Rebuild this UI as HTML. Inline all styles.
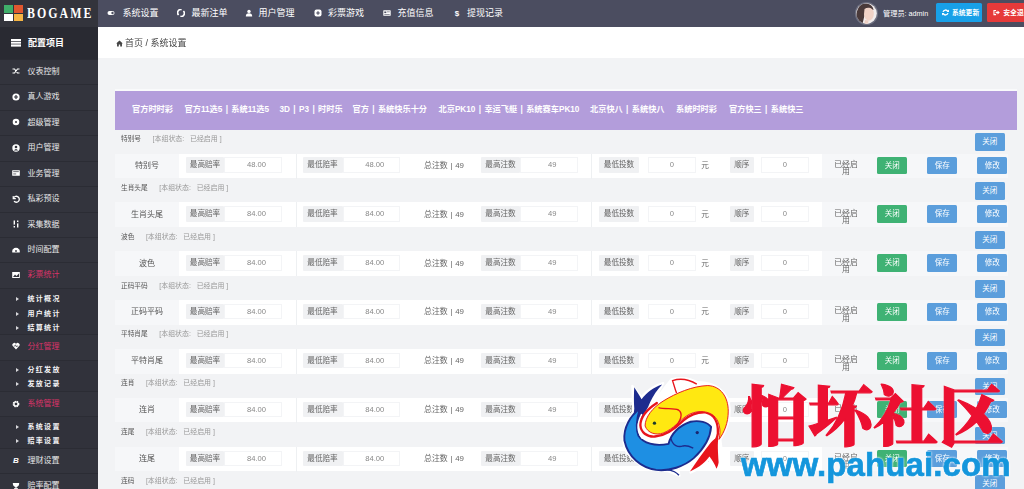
<!DOCTYPE html><html lang="zh-CN"><head><meta charset="utf-8"><title>系统设置</title><style>
*{box-sizing:border-box;margin:0;padding:0}
html,body{width:1024px;height:489px;overflow:hidden;background:#f2f3f5;font-family:'Liberation Sans', 'Noto Sans CJK SC', sans-serif;color:#555}
#wrap{position:relative;width:1024px;height:489px;overflow:hidden;filter:blur(0.45px)}
.abs{position:absolute}
#top{left:0;top:0;width:1024px;height:27px;background:#4b4d60}
#logo{left:0;top:0;width:98px;height:27px;background:#33343c}
#side{left:0;top:27px;width:98px;height:462px;background:#33343d}
.nav{position:absolute;top:0;height:27px;line-height:27px;color:#fff;font-size:9px;white-space:nowrap}
.sitem{position:absolute;left:0;width:98px;height:25.5px;border-top:1px solid #2b2c34;color:#e8e8ea;font-size:8px;line-height:25px;white-space:nowrap}
.sitem span{position:absolute;left:27.5px}
.sitem i{position:absolute;left:11.5px;width:8px;height:8px}
.sitem.pink{color:#dc3369}
.sub{position:absolute;left:0;width:98px;background:#31323b;border-top:1px solid #2b2c34}
.sub div{position:absolute;left:27.5px;color:#f4f4f6;font-weight:bold;font-size:7px;letter-spacing:1.3px;white-space:nowrap;line-height:10px}
.sub b{position:absolute;left:16px;width:0;height:0;border-left:3px solid #d8d8dc;border-top:2px solid transparent;border-bottom:2px solid transparent}
.tab{position:absolute;top:92px;height:38px;line-height:35px;color:#fff;font-size:8.2px;white-space:nowrap;font-weight:bold;word-spacing:1.1px}
.gh{position:absolute;left:121px;font-size:6.7px;color:#555;white-space:nowrap;line-height:10px}
.gh em{font-style:normal;color:#999;position:absolute;top:0;font-size:6.95px}
.row{position:absolute;left:179px;width:643px;height:24.5px;background:#fff}
.lab{position:absolute;height:15.5px;line-height:15.5px;background:#f0f1f3;color:#666;font-size:7.6px;text-align:center;border-radius:1px;white-space:nowrap}
.inp{position:absolute;height:15.5px;line-height:13.6px;background:#fff;border:1px solid #f3f4f6;color:#888;font-size:7.6px;text-align:center;padding-left:7px}
.txt{position:absolute;font-size:7.6px;color:#666;white-space:nowrap;line-height:10px;text-align:center}
.btn{position:absolute;height:17.6px;line-height:17.4px;color:#fff;font-size:7.5px;text-align:center;border-radius:1.5px;width:30.3px}
.blue{background:#5b9edc}
.green{background:#3fb274}
.vsep{position:absolute;width:1px;background:#eef0f2;top:0;height:25px}
</style></head><body><div id="wrap">
<div id="top" class="abs"></div><div id="logo" class="abs">
<svg class="abs" style="left:4px;top:5px" width="19" height="16" viewBox="0 0 19 16"><rect x="0" y="0" width="9" height="8" fill="#3fae6a"/><rect x="10" y="0" width="9" height="8" fill="#e0572f"/><rect x="0" y="9" width="9" height="7" fill="#fff"/><rect x="10" y="9" width="9" height="7" fill="#f5b544"/></svg>
<div class="abs" style="left:27px;top:0;height:27px;line-height:27px;color:#fff;font-family:'Liberation Serif', 'Noto Serif CJK SC', serif;font-weight:bold;font-size:14px;letter-spacing:2.4px;white-space:nowrap;transform:scaleX(0.85);transform-origin:0 50%">BOGAME</div>
</div>
<svg class="abs" style="left:107px;top:9px" width="8" height="8" viewBox="0 0 8 8"><rect x="0.5" y="2" width="7" height="4" rx="2" fill="#fff"/><circle cx="5.5" cy="4" r="1.2" fill="#4b4d60"/></svg>
<div class="nav" style="left:122.5px">系统设置</div>
<svg class="abs" style="left:177px;top:9px" width="8" height="8" viewBox="0 0 8 8"><path d="M4.6 0.6 A3.2 3.2 0 0 0 1.6 6" stroke="#fff" stroke-width="1.7" fill="none"/><path d="M3.4 7.4 A3.2 3.2 0 0 0 6.4 2" stroke="#fff" stroke-width="1.7" fill="none"/></svg>
<div class="nav" style="left:191.5px">最新注单</div>
<svg class="abs" style="left:245px;top:9px" width="8" height="8" viewBox="0 0 8 8"><circle cx="4" cy="2.4" r="1.7" fill="#fff"/><path d="M0.8 7.5 Q0.8 4.3 4 4.3 Q7.2 4.3 7.2 7.5 Z" fill="#fff"/></svg>
<div class="nav" style="left:258.5px">用户管理</div>
<svg class="abs" style="left:314px;top:9px" width="8" height="8" viewBox="0 0 8 8"><rect x="0.5" y="0.5" width="7" height="7" rx="2" fill="#fff"/><path d="M4 2.2 V5.8 M2.2 4 H5.8" stroke="#4b4d60" stroke-width="1.2"/></svg>
<div class="nav" style="left:328px">彩票游戏</div>
<svg class="abs" style="left:383px;top:9px" width="8" height="8" viewBox="0 0 8 8"><rect x="0.3" y="1.2" width="7.4" height="5.6" rx="0.6" fill="#fff"/><rect x="1.3" y="2.5" width="2" height="1.6" fill="#4b4d60"/><rect x="4" y="2.6" width="2.8" height="0.6" fill="#4b4d60"/><rect x="1.3" y="5" width="5.4" height="0.6" fill="#4b4d60"/></svg>
<div class="nav" style="left:397.5px">充值信息</div>
<svg class="abs" style="left:453px;top:9px" width="8" height="8" viewBox="0 0 8 8"><text x="4" y="7" font-size="8" font-weight="bold" fill="#fff" text-anchor="middle" font-family="Liberation Sans, sans-serif">$</text></svg>
<div class="nav" style="left:467px">提现记录</div>
<svg class="abs" style="left:853.5px;top:0.5px" width="25" height="25" viewBox="0 0 25 25"><defs><clipPath id="av"><circle cx="12.5" cy="12.5" r="10.3"/></clipPath></defs><circle cx="12.5" cy="12.5" r="11.6" fill="#6d6f80"/><g clip-path="url(#av)"><rect width="25" height="25" fill="#f1ecec"/><path d="M2 25 C1 12 4 2.5 11 2.5 C16 2.5 19 5 19.5 9 L12 8 L8 25 Z" fill="#4a3a3a"/><path d="M10.5 8 C14 5.5 19.5 7 19.8 11.5 C20 15.5 18.5 19 15.5 19.5 C12.5 19.8 10 17 10 13 Z" fill="#f0d2c6"/><path d="M9 25 Q14 18 21 25 Z" fill="#fbf7f6"/><path d="M11 19 L14.5 19.5 L14 24 L10 24 Z" fill="#edcfc3"/></g></svg>
<div class="abs" style="left:883px;top:0;height:27px;line-height:27px;color:#fff;font-size:7.2px;white-space:nowrap">管理员: admin</div>
<div class="abs" style="left:936px;top:2.7px;width:46px;height:19px;background:#18a0e8;border-radius:1.5px;color:#fff;font-size:6.8px;font-weight:bold;line-height:19px;white-space:nowrap"><svg class="abs" style="left:6px;top:6px" width="7" height="7" viewBox="0 0 8 8"><path d="M6.6 2.6 A3 3 0 0 0 1.2 3.3" stroke="#fff" stroke-width="1.6" fill="none"/><path d="M1.4 5.4 A3 3 0 0 0 6.8 4.7" stroke="#fff" stroke-width="1.6" fill="none"/><path d="M5.2 3.3 H8 V0.5 Z M2.8 4.7 H0 V7.5 Z" fill="#fff"/></svg><span class="abs" style="left:16px;top:0">系统更新</span></div>
<div class="abs" style="left:987.3px;top:2.7px;width:45px;height:19px;background:#e63a3a;border-radius:1.5px;color:#fff;font-size:6.8px;font-weight:bold;line-height:19px;white-space:nowrap"><svg class="abs" style="left:6px;top:6px" width="7" height="7" viewBox="0 0 8 8"><path d="M0.5 1 H3.5 V2.2 H1.7 V5.8 H3.5 V7 H0.5 Z" fill="#fff"/><path d="M3 3.2 H5.2 V1.6 L7.8 4 L5.2 6.4 V4.8 H3 Z" fill="#fff"/></svg><span class="abs" style="left:16px;top:0">安全退出</span></div>
<div id="side" class="abs"></div>
<div class="abs" style="left:0;top:27px;width:98px;height:33px;background:#292a32"></div>
<svg class="abs" style="left:11px;top:38.5px" width="10" height="8" viewBox="0 0 10 8"><rect x="0" y="0" width="10" height="2" fill="#fff"/><rect x="0" y="2.7" width="10" height="2" fill="#fff"/><rect x="0" y="5.4" width="10" height="2.2" fill="#fff"/></svg>
<div class="abs" style="left:28px;top:27px;height:33px;line-height:32px;color:#fff;font-size:9px;font-weight:bold;white-space:nowrap">配置项目</div>
<div class="sitem" style="top:58.5px;height:25.5px;line-height:23.4px"><i style="top:7.7px"><svg width="8" height="8" viewBox="0 0 8 8" style="display:block"><path d="M0.5 2 H2.5 L5.5 6 H7.5 M0.5 6 H2.5 L5.5 2 H7.5" stroke="#fff" stroke-width="1.2" fill="none"/></svg></i><span>仪表控制</span></div>
<div class="sitem" style="top:84px;height:25.5px;line-height:23.4px"><i style="top:7.7px"><svg width="8" height="8" viewBox="0 0 8 8" style="display:block"><circle cx="4" cy="4" r="3.6" fill="#fff"/><path d="M4 2 V6 M2 4 H6" stroke="#33343d" stroke-width="1.2"/></svg></i><span>真人游戏</span></div>
<div class="sitem" style="top:109.5px;height:25.5px;line-height:23.4px"><i style="top:7.7px"><svg width="8" height="8" viewBox="0 0 8 8" style="display:block"><circle cx="4" cy="4" r="3.3" fill="#fff"/><circle cx="4" cy="4" r="1" fill="#33343d"/></svg></i><span>超级管理</span></div>
<div class="sitem" style="top:135px;height:25.5px;line-height:23.4px"><i style="top:7.7px"><svg width="8" height="8" viewBox="0 0 8 8" style="display:block"><circle cx="4" cy="4" r="3.7" fill="#fff"/><circle cx="4" cy="3" r="1.3" fill="#33343d"/><path d="M1.8 6.6 Q4 3.6 6.2 6.6 Z" fill="#33343d"/></svg></i><span>用户管理</span></div>
<div class="sitem" style="top:160.5px;height:25.5px;line-height:23.4px"><i style="top:7.7px"><svg width="8" height="8" viewBox="0 0 8 8" style="display:block"><rect x="0.2" y="1.2" width="7.6" height="5.6" rx="0.5" fill="#fff"/><rect x="1.2" y="2.4" width="5.6" height="0.7" fill="#33343d"/><rect x="1.2" y="4.6" width="3" height="0.7" fill="#33343d"/></svg></i><span>业务管理</span></div>
<div class="sitem" style="top:186px;height:25.5px;line-height:23.4px"><i style="top:7.7px"><svg width="8" height="8" viewBox="0 0 8 8" style="display:block"><path d="M1.2 1 V3.6 H3.8" stroke="#fff" stroke-width="1.1" fill="none"/><path d="M1.4 3.4 A3 3 0 1 1 2 6.2" stroke="#fff" stroke-width="1.3" fill="none"/></svg></i><span>私彩预设</span></div>
<div class="sitem" style="top:211.5px;height:25.5px;line-height:23.4px"><i style="top:7.7px"><svg width="8" height="8" viewBox="0 0 8 8" style="display:block"><path d="M2.3 0.5 V7.5 M5.7 0.5 V7.5" stroke="#fff" stroke-width="1.4"/><rect x="1.2" y="4.6" width="2.2" height="1.4" fill="#33343d"/><rect x="4.6" y="2" width="2.2" height="1.4" fill="#33343d"/></svg></i><span>采集数据</span></div>
<div class="sitem" style="top:237px;height:25.5px;line-height:23.4px"><i style="top:7.7px"><svg width="8" height="8" viewBox="0 0 8 8" style="display:block"><path d="M0.3 6.5 A3.8 3.8 0 1 1 7.7 6.5 Z" fill="#fff"/><circle cx="4" cy="5" r="0.9" fill="#33343d"/></svg></i><span>时间配置</span></div>
<div class="sitem pink" style="top:262px;height:26px;line-height:23.4px"><i style="top:7.7px"><svg width="8" height="8" viewBox="0 0 8 8" style="display:block"><rect x="0.2" y="1" width="7.6" height="6" fill="#fff"/><path d="M1 6 L3 3.5 L4.5 5 L7 2.4 V6 Z" fill="#33343d"/></svg></i><span>彩票统计</span></div>
<div class="sub" style="top:288px;height:45.5px"><b style="top:8px"></b><div style="top:5px">统计概况</div><b style="top:22.5px"></b><div style="top:19.5px">用户统计</div><b style="top:37px"></b><div style="top:34px">结算统计</div></div>
<div class="sitem pink" style="top:333.5px;height:26px;line-height:23.4px"><i style="top:7.7px"><svg width="8" height="8" viewBox="0 0 8 8" style="display:block"><path d="M4 7.4 L0.6 3.8 A1.9 1.9 0 0 1 4 1.9 A1.9 1.9 0 0 1 7.4 3.8 Z" fill="#fff"/><path d="M1.8 4 H3 L3.6 2.8 L4.4 5 L5 4 H6.2" stroke="#33343d" stroke-width="0.6" fill="none"/></svg></i><span>分红管理</span></div>
<div class="sub" style="top:359.5px;height:31.5px"><b style="top:7.5px"></b><div style="top:4.5px">分红发放</div><b style="top:21.5px"></b><div style="top:18.5px">发放记录</div></div>
<div class="sitem pink" style="top:391px;height:25px;line-height:23.4px"><i style="top:7.7px"><svg width="8" height="8" viewBox="0 0 8 8" style="display:block"><circle cx="4" cy="4" r="2.6" stroke="#fff" stroke-width="1.5" fill="none" stroke-dasharray="1.4 0.7"/><circle cx="4" cy="4" r="2" stroke="#fff" stroke-width="1.1" fill="none"/></svg></i><span>系统管理</span></div>
<div class="sub" style="top:416px;height:31.5px"><b style="top:7.5px"></b><div style="top:4.5px">系统设置</div><b style="top:22px"></b><div style="top:19px">赔率设置</div></div>
<div class="sitem" style="top:447.5px;height:25.5px;line-height:23.4px"><i style="top:7.7px"><svg width="8" height="8" viewBox="0 0 8 8" style="display:block"><text x="4" y="7" font-size="8" font-weight="bold" fill="#fff" text-anchor="middle" font-family="Liberation Sans, sans-serif">B</text></svg></i><span>理财设置</span></div>
<div class="sitem" style="top:473px;height:25.5px;line-height:23.4px"><i style="top:7.7px"><svg width="8" height="8" viewBox="0 0 8 8" style="display:block"><path d="M0.8 1 H7.2 Q7.2 4.6 4.6 5 V6.3 H6 V7.3 H2 V6.3 H3.4 V5 Q0.8 4.6 0.8 1 Z" fill="#fff"/></svg></i><span>赔率配置</span></div>
<div class="abs" style="left:98px;top:27px;width:926px;height:31px;background:#fff"></div>
<svg class="abs" style="left:115.5px;top:40px" width="7" height="7" viewBox="0 0 8 8"><path d="M4 0.5 L0.2 4 H1.2 V7.5 H3.2 V5.2 H4.8 V7.5 H6.8 V4 H7.8 Z" fill="#444"/></svg>
<div class="abs" style="left:125px;top:27px;height:33px;line-height:33px;font-size:9px;color:#444;white-space:nowrap">首页 / 系统设置</div>
<div class="abs" style="left:115px;top:89px;width:902px;height:2px;background:#f9fafb"></div>
<div class="abs" style="left:115px;top:91px;width:902px;height:39px;background:#b39ddb"></div>
<div class="tab" style="left:132px">官方时时彩</div>
<div class="tab" style="left:184.5px">官方11选5 | 系统11选5</div>
<div class="tab" style="left:279.5px">3D | P3 | 时时乐</div>
<div class="tab" style="left:352.5px">官方 | 系统快乐十分</div>
<div class="tab" style="left:438.5px">北京PK10 | 幸运飞艇 | 系统赛车PK10</div>
<div class="tab" style="left:590px">北京快八 | 系统快八</div>
<div class="tab" style="left:676px">系统时时彩</div>
<div class="tab" style="left:729px">官方快三 | 系统快三</div>
<div class="gh" style="top:134px">特别号<em style="left:31.6px">[本组状态:&nbsp;&nbsp;&nbsp;已经启用 ]</em></div>
<div class="btn blue" style="left:974.7px;top:133.4px">关闭</div>
<div class="abs" style="left:115px;top:153.6px;width:893px;height:24.5px;background:#f6f7f9"></div>
<div class="txt" style="left:115px;width:64px;top:160.8px;font-size:8px;color:#555">特别号</div>
<div class="row" style="top:153.6px"><div class="lab" style="left:7px;top:3.8px;width:38px">最高赔率</div><div class="inp" style="left:45px;top:3.8px;width:58px;padding-left:7px">48.00</div><div class="vsep" style="left:117px"></div><div class="lab" style="left:123.5px;top:3.8px;width:40px">最低赔率</div><div class="inp" style="left:163.5px;top:3.8px;width:57.5px;padding-left:7px">48.00</div><div class="txt" style="left:235px;top:7.2px;width:60px;font-size:7.9px;word-spacing:0.5px">总注数 | 49</div><div class="lab" style="left:302px;top:3.8px;width:39px">最高注数</div><div class="inp" style="left:341px;top:3.8px;width:57.5px;padding-left:7px">49</div><div class="vsep" style="left:412px"></div><div class="lab" style="left:420px;top:3.8px;width:40px">最低投数</div><div class="inp" style="left:468.5px;top:3.8px;width:48.5px;padding-left:0px">0</div><div class="txt" style="left:520px;top:7.2px;width:12px">元</div><div class="lab" style="left:550.5px;top:3.8px;width:24.5px">顺序</div><div class="inp" style="left:581.5px;top:3.8px;width:48.5px;padding-left:0px">0</div></div>
<div class="txt" style="left:831px;top:160.8px;width:30px;line-height:7.6px;white-space:normal;font-size:7.9px">已经启用</div>
<div class="btn green" style="left:877.1px;top:156.6px">关闭</div>
<div class="btn blue" style="left:927px;top:156.6px">保存</div>
<div class="btn blue" style="left:977px;top:156.6px">修改</div>
<div class="gh" style="top:182.86px">生肖头尾<em style="left:38.3px">[本组状态:&nbsp;&nbsp;&nbsp;已经启用 ]</em></div>
<div class="btn blue" style="left:974.7px;top:182.26px">关闭</div>
<div class="abs" style="left:115px;top:202.46px;width:893px;height:24.5px;background:#f6f7f9"></div>
<div class="txt" style="left:115px;width:64px;top:209.66px;font-size:8px;color:#555">生肖头尾</div>
<div class="row" style="top:202.46px"><div class="lab" style="left:7px;top:3.8px;width:38px">最高赔率</div><div class="inp" style="left:45px;top:3.8px;width:58px;padding-left:7px">84.00</div><div class="vsep" style="left:117px"></div><div class="lab" style="left:123.5px;top:3.8px;width:40px">最低赔率</div><div class="inp" style="left:163.5px;top:3.8px;width:57.5px;padding-left:7px">84.00</div><div class="txt" style="left:235px;top:7.2px;width:60px;font-size:7.9px;word-spacing:0.5px">总注数 | 49</div><div class="lab" style="left:302px;top:3.8px;width:39px">最高注数</div><div class="inp" style="left:341px;top:3.8px;width:57.5px;padding-left:7px">49</div><div class="vsep" style="left:412px"></div><div class="lab" style="left:420px;top:3.8px;width:40px">最低投数</div><div class="inp" style="left:468.5px;top:3.8px;width:48.5px;padding-left:0px">0</div><div class="txt" style="left:520px;top:7.2px;width:12px">元</div><div class="lab" style="left:550.5px;top:3.8px;width:24.5px">顺序</div><div class="inp" style="left:581.5px;top:3.8px;width:48.5px;padding-left:0px">0</div></div>
<div class="txt" style="left:831px;top:209.66px;width:30px;line-height:7.6px;white-space:normal;font-size:7.9px">已经启用</div>
<div class="btn green" style="left:877.1px;top:205.46px">关闭</div>
<div class="btn blue" style="left:927px;top:205.46px">保存</div>
<div class="btn blue" style="left:977px;top:205.46px">修改</div>
<div class="gh" style="top:231.72px">波色<em style="left:24.9px">[本组状态:&nbsp;&nbsp;&nbsp;已经启用 ]</em></div>
<div class="btn blue" style="left:974.7px;top:231.12px">关闭</div>
<div class="abs" style="left:115px;top:251.32px;width:893px;height:24.5px;background:#f6f7f9"></div>
<div class="txt" style="left:115px;width:64px;top:258.52px;font-size:8px;color:#555">波色</div>
<div class="row" style="top:251.32px"><div class="lab" style="left:7px;top:3.8px;width:38px">最高赔率</div><div class="inp" style="left:45px;top:3.8px;width:58px;padding-left:7px">84.00</div><div class="vsep" style="left:117px"></div><div class="lab" style="left:123.5px;top:3.8px;width:40px">最低赔率</div><div class="inp" style="left:163.5px;top:3.8px;width:57.5px;padding-left:7px">84.00</div><div class="txt" style="left:235px;top:7.2px;width:60px;font-size:7.9px;word-spacing:0.5px">总注数 | 49</div><div class="lab" style="left:302px;top:3.8px;width:39px">最高注数</div><div class="inp" style="left:341px;top:3.8px;width:57.5px;padding-left:7px">49</div><div class="vsep" style="left:412px"></div><div class="lab" style="left:420px;top:3.8px;width:40px">最低投数</div><div class="inp" style="left:468.5px;top:3.8px;width:48.5px;padding-left:0px">0</div><div class="txt" style="left:520px;top:7.2px;width:12px">元</div><div class="lab" style="left:550.5px;top:3.8px;width:24.5px">顺序</div><div class="inp" style="left:581.5px;top:3.8px;width:48.5px;padding-left:0px">0</div></div>
<div class="txt" style="left:831px;top:258.52px;width:30px;line-height:7.6px;white-space:normal;font-size:7.9px">已经启用</div>
<div class="btn green" style="left:877.1px;top:254.32px">关闭</div>
<div class="btn blue" style="left:927px;top:254.32px">保存</div>
<div class="btn blue" style="left:977px;top:254.32px">修改</div>
<div class="gh" style="top:280.58px">正码平码<em style="left:38.3px">[本组状态:&nbsp;&nbsp;&nbsp;已经启用 ]</em></div>
<div class="btn blue" style="left:974.7px;top:279.98px">关闭</div>
<div class="abs" style="left:115px;top:300.18px;width:893px;height:24.5px;background:#f6f7f9"></div>
<div class="txt" style="left:115px;width:64px;top:307.38px;font-size:8px;color:#555">正码平码</div>
<div class="row" style="top:300.18px"><div class="lab" style="left:7px;top:3.8px;width:38px">最高赔率</div><div class="inp" style="left:45px;top:3.8px;width:58px;padding-left:7px">84.00</div><div class="vsep" style="left:117px"></div><div class="lab" style="left:123.5px;top:3.8px;width:40px">最低赔率</div><div class="inp" style="left:163.5px;top:3.8px;width:57.5px;padding-left:7px">84.00</div><div class="txt" style="left:235px;top:7.2px;width:60px;font-size:7.9px;word-spacing:0.5px">总注数 | 49</div><div class="lab" style="left:302px;top:3.8px;width:39px">最高注数</div><div class="inp" style="left:341px;top:3.8px;width:57.5px;padding-left:7px">49</div><div class="vsep" style="left:412px"></div><div class="lab" style="left:420px;top:3.8px;width:40px">最低投数</div><div class="inp" style="left:468.5px;top:3.8px;width:48.5px;padding-left:0px">0</div><div class="txt" style="left:520px;top:7.2px;width:12px">元</div><div class="lab" style="left:550.5px;top:3.8px;width:24.5px">顺序</div><div class="inp" style="left:581.5px;top:3.8px;width:48.5px;padding-left:0px">0</div></div>
<div class="txt" style="left:831px;top:307.38px;width:30px;line-height:7.6px;white-space:normal;font-size:7.9px">已经启用</div>
<div class="btn green" style="left:877.1px;top:303.18px">关闭</div>
<div class="btn blue" style="left:927px;top:303.18px">保存</div>
<div class="btn blue" style="left:977px;top:303.18px">修改</div>
<div class="gh" style="top:329.44px">平特肖尾<em style="left:38.3px">[本组状态:&nbsp;&nbsp;&nbsp;已经启用 ]</em></div>
<div class="btn blue" style="left:974.7px;top:328.84px">关闭</div>
<div class="abs" style="left:115px;top:349.04px;width:893px;height:24.5px;background:#f6f7f9"></div>
<div class="txt" style="left:115px;width:64px;top:356.24px;font-size:8px;color:#555">平特肖尾</div>
<div class="row" style="top:349.04px"><div class="lab" style="left:7px;top:3.8px;width:38px">最高赔率</div><div class="inp" style="left:45px;top:3.8px;width:58px;padding-left:7px">84.00</div><div class="vsep" style="left:117px"></div><div class="lab" style="left:123.5px;top:3.8px;width:40px">最低赔率</div><div class="inp" style="left:163.5px;top:3.8px;width:57.5px;padding-left:7px">84.00</div><div class="txt" style="left:235px;top:7.2px;width:60px;font-size:7.9px;word-spacing:0.5px">总注数 | 49</div><div class="lab" style="left:302px;top:3.8px;width:39px">最高注数</div><div class="inp" style="left:341px;top:3.8px;width:57.5px;padding-left:7px">49</div><div class="vsep" style="left:412px"></div><div class="lab" style="left:420px;top:3.8px;width:40px">最低投数</div><div class="inp" style="left:468.5px;top:3.8px;width:48.5px;padding-left:0px">0</div><div class="txt" style="left:520px;top:7.2px;width:12px">元</div><div class="lab" style="left:550.5px;top:3.8px;width:24.5px">顺序</div><div class="inp" style="left:581.5px;top:3.8px;width:48.5px;padding-left:0px">0</div></div>
<div class="txt" style="left:831px;top:356.24px;width:30px;line-height:7.6px;white-space:normal;font-size:7.9px">已经启用</div>
<div class="btn green" style="left:877.1px;top:352.04px">关闭</div>
<div class="btn blue" style="left:927px;top:352.04px">保存</div>
<div class="btn blue" style="left:977px;top:352.04px">修改</div>
<div class="gh" style="top:378.3px">连肖<em style="left:24.9px">[本组状态:&nbsp;&nbsp;&nbsp;已经启用 ]</em></div>
<div class="btn blue" style="left:974.7px;top:377.7px">关闭</div>
<div class="abs" style="left:115px;top:397.9px;width:893px;height:24.5px;background:#f6f7f9"></div>
<div class="txt" style="left:115px;width:64px;top:405.1px;font-size:8px;color:#555">连肖</div>
<div class="row" style="top:397.9px"><div class="lab" style="left:7px;top:3.8px;width:38px">最高赔率</div><div class="inp" style="left:45px;top:3.8px;width:58px;padding-left:7px">84.00</div><div class="vsep" style="left:117px"></div><div class="lab" style="left:123.5px;top:3.8px;width:40px">最低赔率</div><div class="inp" style="left:163.5px;top:3.8px;width:57.5px;padding-left:7px">84.00</div><div class="txt" style="left:235px;top:7.2px;width:60px;font-size:7.9px;word-spacing:0.5px">总注数 | 49</div><div class="lab" style="left:302px;top:3.8px;width:39px">最高注数</div><div class="inp" style="left:341px;top:3.8px;width:57.5px;padding-left:7px">49</div><div class="vsep" style="left:412px"></div><div class="lab" style="left:420px;top:3.8px;width:40px">最低投数</div><div class="inp" style="left:468.5px;top:3.8px;width:48.5px;padding-left:0px">0</div><div class="txt" style="left:520px;top:7.2px;width:12px">元</div><div class="lab" style="left:550.5px;top:3.8px;width:24.5px">顺序</div><div class="inp" style="left:581.5px;top:3.8px;width:48.5px;padding-left:0px">0</div></div>
<div class="txt" style="left:831px;top:405.1px;width:30px;line-height:7.6px;white-space:normal;font-size:7.9px">已经启用</div>
<div class="btn green" style="left:877.1px;top:400.9px">关闭</div>
<div class="btn blue" style="left:927px;top:400.9px">保存</div>
<div class="btn blue" style="left:977px;top:400.9px">修改</div>
<div class="gh" style="top:427.16px">连尾<em style="left:24.9px">[本组状态:&nbsp;&nbsp;&nbsp;已经启用 ]</em></div>
<div class="btn blue" style="left:974.7px;top:426.56px">关闭</div>
<div class="abs" style="left:115px;top:446.76px;width:893px;height:24.5px;background:#f6f7f9"></div>
<div class="txt" style="left:115px;width:64px;top:453.96px;font-size:8px;color:#555">连尾</div>
<div class="row" style="top:446.76px"><div class="lab" style="left:7px;top:3.8px;width:38px">最高赔率</div><div class="inp" style="left:45px;top:3.8px;width:58px;padding-left:7px">84.00</div><div class="vsep" style="left:117px"></div><div class="lab" style="left:123.5px;top:3.8px;width:40px">最低赔率</div><div class="inp" style="left:163.5px;top:3.8px;width:57.5px;padding-left:7px">84.00</div><div class="txt" style="left:235px;top:7.2px;width:60px;font-size:7.9px;word-spacing:0.5px">总注数 | 49</div><div class="lab" style="left:302px;top:3.8px;width:39px">最高注数</div><div class="inp" style="left:341px;top:3.8px;width:57.5px;padding-left:7px">49</div><div class="vsep" style="left:412px"></div><div class="lab" style="left:420px;top:3.8px;width:40px">最低投数</div><div class="inp" style="left:468.5px;top:3.8px;width:48.5px;padding-left:0px">0</div><div class="txt" style="left:520px;top:7.2px;width:12px">元</div><div class="lab" style="left:550.5px;top:3.8px;width:24.5px">顺序</div><div class="inp" style="left:581.5px;top:3.8px;width:48.5px;padding-left:0px">0</div></div>
<div class="txt" style="left:831px;top:453.96px;width:30px;line-height:7.6px;white-space:normal;font-size:7.9px">已经启用</div>
<div class="btn green" style="left:877.1px;top:449.76px">关闭</div>
<div class="btn blue" style="left:927px;top:449.76px">保存</div>
<div class="btn blue" style="left:977px;top:449.76px">修改</div>
<div class="gh" style="top:476.02px">连码<em style="left:24.9px">[本组状态:&nbsp;&nbsp;&nbsp;已经启用 ]</em></div>
<div class="btn blue" style="left:974.7px;top:475.42px">关闭</div>
<div class="abs" style="left:115px;top:495.62px;width:893px;height:24.5px;background:#f6f7f9"></div>
<div class="txt" style="left:115px;width:64px;top:502.82px;font-size:8px;color:#555">连码</div>
<div class="row" style="top:495.62px"><div class="lab" style="left:7px;top:3.8px;width:38px">最高赔率</div><div class="inp" style="left:45px;top:3.8px;width:58px;padding-left:7px">84.00</div><div class="vsep" style="left:117px"></div><div class="lab" style="left:123.5px;top:3.8px;width:40px">最低赔率</div><div class="inp" style="left:163.5px;top:3.8px;width:57.5px;padding-left:7px">84.00</div><div class="txt" style="left:235px;top:7.2px;width:60px;font-size:7.9px;word-spacing:0.5px">总注数 | 49</div><div class="lab" style="left:302px;top:3.8px;width:39px">最高注数</div><div class="inp" style="left:341px;top:3.8px;width:57.5px;padding-left:7px">49</div><div class="vsep" style="left:412px"></div><div class="lab" style="left:420px;top:3.8px;width:40px">最低投数</div><div class="inp" style="left:468.5px;top:3.8px;width:48.5px;padding-left:0px">0</div><div class="txt" style="left:520px;top:7.2px;width:12px">元</div><div class="lab" style="left:550.5px;top:3.8px;width:24.5px">顺序</div><div class="inp" style="left:581.5px;top:3.8px;width:48.5px;padding-left:0px">0</div></div>
<div class="txt" style="left:831px;top:502.82px;width:30px;line-height:7.6px;white-space:normal;font-size:7.9px">已经启用</div>
<div class="btn green" style="left:877.1px;top:498.62px">关闭</div>
<div class="btn blue" style="left:927px;top:498.62px">保存</div>
<div class="btn blue" style="left:977px;top:498.62px">修改</div>
<svg class="abs" style="left:615px;top:370px" width="125" height="115" viewBox="0 0 532 489">
<path d="M104,235 C120,180 150,150 172,136 C190,100 215,70 240,40 C280,30 320,35 350,52 C420,50 488,90 488,170 C488,230 465,270 448,295 C456,340 454,380 442,416 L406,372 C380,405 350,425 322,436 L345,385 C320,405 290,420 270,428 L274,450 L225,430 C120,430 36,370 36,300 C36,250 50,215 76,190 C78,150 76,110 74,68 L113,115 C140,85 170,65 205,56 C190,80 178,105 170,130 Z" fill="#fff" stroke="#fff" stroke-width="10" stroke-linejoin="round"/>
<path d="M82,73 C92,90 104,108 113,124 C135,95 165,72 201,61 C180,82 162,110 150,136 C140,162 124,190 104,214 C96,224 88,232 80,240 C76,215 79,190 82,165 C80,135 80,100 82,73 Z" fill="#1d2c8e"/>
<path d="M409,242 C406,285 378,335 335,375 C295,410 230,432 175,425 C110,415 55,370 40,300 C35,245 65,195 105,165 C95,200 85,245 100,280 C120,312 170,326 228,314 C238,272 272,236 322,220 C358,212 395,222 409,242 Z" fill="#1e8fe3" stroke="#1d2c8e" stroke-width="8" stroke-linejoin="round"/>
<path d="M113,190 C95,226 93,262 116,290" stroke="#fff" stroke-width="7" fill="none" stroke-linecap="round"/>
<path d="M238,292 C246,322 268,330 290,323 C305,320 320,326 333,332" stroke="#1d2c8e" stroke-width="6" fill="none"/>
<path d="M225,424 C245,428 262,436 272,448" stroke="#1d2c8e" stroke-width="6" fill="none"/>
<path d="M262,98 C255,80 250,60 245,45 C275,35 315,40 348,60" stroke="#e8141c" stroke-width="6" fill="#fff"/>
<path d="M440,288 C436,315 438,345 441,392 C440,402 436,412 432,420 C424,400 414,384 402,368 C388,388 360,414 319,432 C345,392 374,350 408,308 C420,296 428,288 440,288 Z" fill="#e8141c"/>
<path d="M178,140 C140,165 108,200 108,235 C110,265 135,285 170,283 C215,280 255,250 290,215 C320,190 350,178 385,180 C420,188 440,220 438,270 C432,310 400,350 370,390" stroke="#e8141c" stroke-width="10" fill="none" stroke-linecap="round"/>
<path d="M128,238 C128,200 160,160 205,132 C260,98 330,68 395,66 C450,68 482,115 482,175 C482,225 465,265 443,295 C452,255 445,215 418,192 C385,170 340,172 305,195 C275,215 250,250 205,268 C175,278 140,270 128,238 Z" fill="#ffe811" stroke="#e8141c" stroke-width="4"/>
<path d="M185,160 C215,168 250,160 270,170 C292,185 280,220 250,246" stroke="#e8141c" stroke-width="6" fill="none"/>
<circle cx="168" cy="226" r="7" fill="#1c3a2c"/>
<circle cx="350" cy="266" r="7" fill="#1a2670"/>
</svg>

<div class="abs" style="left:742.5px;top:371px;font-family:'Liberation Serif', 'Noto Serif CJK SC', serif;font-weight:900;font-size:65px;line-height:94px;color:#ec1031;white-space:nowrap;letter-spacing:0.4px;-webkit-text-stroke:1.2px #ec1031;text-shadow:0 0 2px #fff">怕坏社区</div>
<div class="abs" style="left:741px;top:444.5px;font-family:'Liberation Sans', sans-serif;font-weight:bold;font-size:33px;line-height:40px;color:#1496dc;white-space:nowrap;letter-spacing:0.1px;-webkit-text-stroke:0.7px #1496dc;text-shadow:0 0 2px #fff,0 0 3px #fff">www.pahuai.com</div>
</div></body></html>
